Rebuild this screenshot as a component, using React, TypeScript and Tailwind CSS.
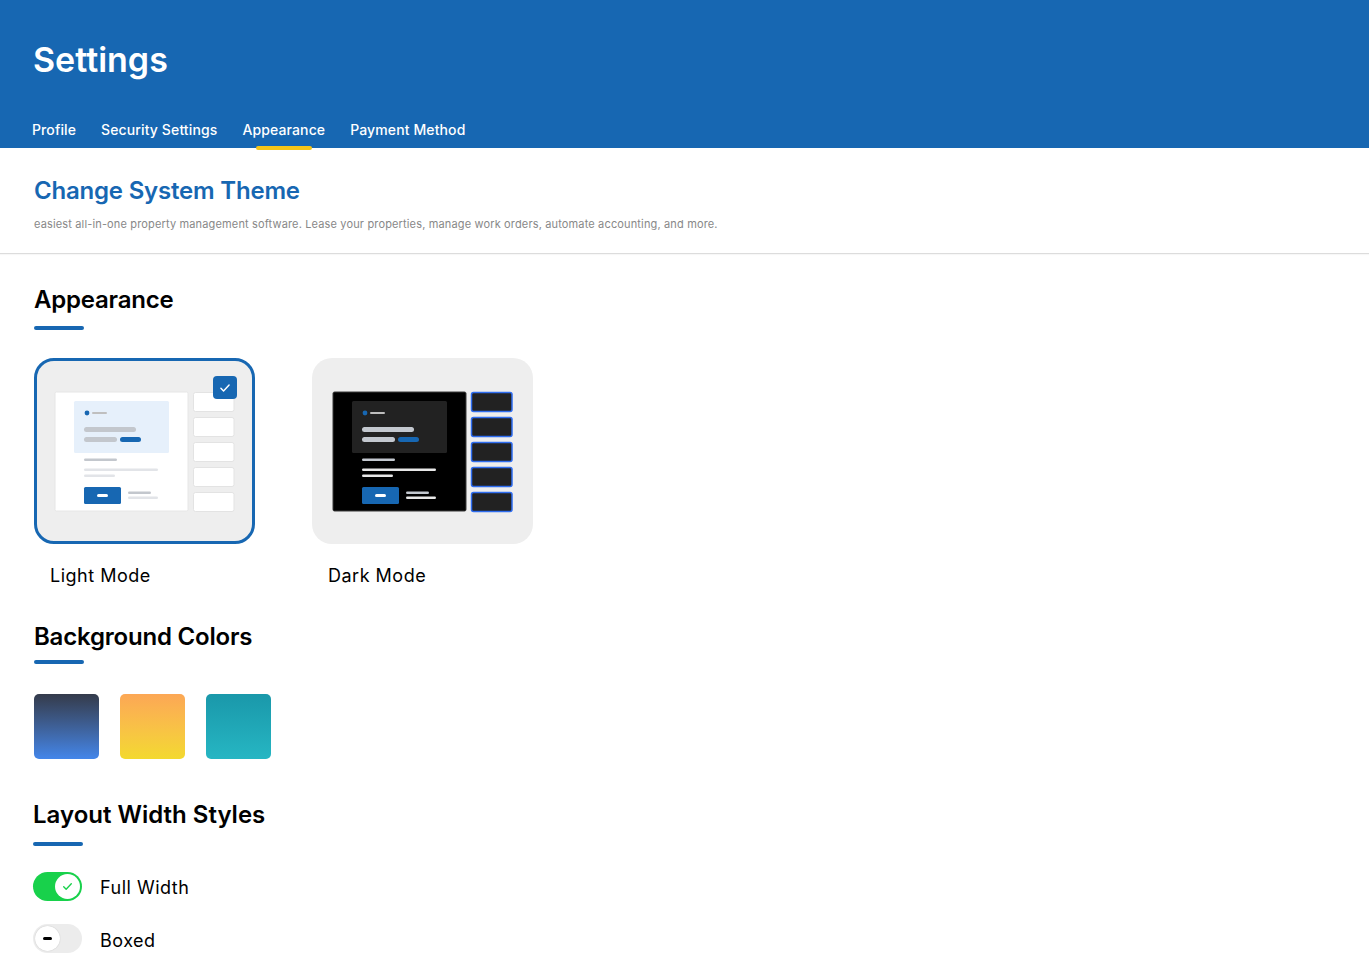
import React from "react";

const BLUE = "#1767B2";

function ThemeArt({ dark }: { dark?: boolean }) {
  const panel = dark ? "#000000" : "#ffffff";
  const panelStroke = dark ? "#3a3a3a" : "#e6e6e6";
  const inner = dark ? "#222222" : "#e6f0fb";
  const barA = dark ? "#c3c8cf" : "#c3c7cd";
  const lineA = dark ? "#c3c8cf" : "#c3c7cd";
  const lineB = dark ? "#e8e8e8" : "#e2e4e8";
  const side = dark ? "#222222" : "#ffffff";
  const sideStroke = dark ? "#2f6df0" : "#e3e3e3";
  return (
    <svg className="absolute inset-0" width="221" height="186" viewBox="0 0 221 186">
      <rect x="21" y="34" width="133" height="119" rx="1.5" fill={panel} stroke={panelStroke} strokeWidth="1" />
      <rect x="40" y="43" width="95" height="52" rx="1.5" fill={inner} />
      <circle cx="53" cy="55" r="2.4" fill={BLUE} />
      <rect x="58" y="54" width="15" height="2" rx="1" fill={dark ? "#bdbdbd" : "#bfbfbf"} />
      <rect x="50" y="69" width="52" height="5" rx="2.5" fill={barA} />
      <rect x="50" y="79" width="33" height="5" rx="2.5" fill={barA} />
      <rect x="86" y="79" width="21" height="5" rx="2.5" fill={BLUE} />
      <rect x="50" y="100.5" width="33" height="2.5" rx="1.2" fill={lineA} />
      <rect x="50" y="110.5" width="74" height="2.5" rx="1.2" fill={lineB} />
      <rect x="50" y="116.5" width="31" height="2.5" rx="1.2" fill={lineB} />
      <rect x="50" y="129" width="37" height="17" rx="1.5" fill={BLUE} />
      <rect x="63" y="136" width="11" height="3" rx="1.5" fill="#ffffff" />
      <rect x="94" y="133.5" width="23" height="2.5" rx="1.2" fill={lineA} />
      <rect x="94" y="138.5" width="30" height="2.5" rx="1.2" fill={lineB} />
      {[34, 59, 84, 109, 134].map((y) => (
        <rect
          key={y}
          x="159.5"
          y={y + 0.5}
          width="40.5"
          height="19"
          rx="2"
          fill={side}
          stroke={sideStroke}
          strokeWidth={dark ? 1.5 : 1}
        />
      ))}
    </svg>
  );
}

function SectionHeading({ children }: { children: React.ReactNode }) {
  return (
    <div>
      <h2 className="text-[24px] leading-[32px] font-semibold text-black tracking-[-0.2px]">{children}</h2>
      <div className="mt-[10px] h-[4px] w-[50px] rounded-full bg-[#1767B2]" />
    </div>
  );
}

export default function App() {
  const tabs = ["Profile", "Security Settings", "Appearance", "Payment Method"];
  return (
    <div className="min-h-[960px] bg-white" style={{ fontFamily: "Inter, 'Noto Sans', sans-serif" }}>
      <header className="h-[148px] bg-[#1767B2] px-[33px] flex flex-col justify-between">
        <h1 className="pt-[40px] text-[34px] leading-[40px] font-semibold text-white tracking-[0px]">Settings</h1>
        <nav className="flex gap-[25px] -ml-[1px]">
          {tabs.map((t) => (
            <div key={t} className="relative pb-[7px]">
              <span className="text-[14px] leading-[20px] font-medium text-white tracking-[0.12px]">{t}</span>
              {t === "Appearance" && (
                <div className="absolute left-1/2 -translate-x-1/2 -bottom-[2px] h-[4px] w-[56px] rounded-full bg-[#F5C518]" />
              )}
            </div>
          ))}
        </nav>
      </header>

      <div className="px-[34px] pt-[27px] pb-[21px] border-b border-[#dcdcdc] shadow-[0_1px_1px_rgba(0,0,0,0.03)]">
        <h2 className="text-[24px] leading-[32px] font-semibold text-[#1767B2] tracking-[-0.2px]">Change System Theme</h2>
        <p className="mt-[9px] text-[11px] leading-[16px] text-[#888888] tracking-[0.15px]">
          easiest all-in-one property management software. Lease your properties, manage work orders, automate accounting, and more.
        </p>
      </div>

      <div className="px-[34px]">
        <div className="pt-[30px]">
          <SectionHeading>Appearance</SectionHeading>
        </div>

        <div className="mt-[28px] flex gap-[57px]">
          <div>
            <div className="relative w-[221px] h-[186px] rounded-[20px] bg-[#eeeeee] border-[3px] border-[#1767B2]">
              <div className="absolute -inset-[3px]">
                <ThemeArt />
                <div className="absolute left-[179px] top-[18px] w-[24px] h-[23px] rounded-[4px] bg-[#1767B2] flex items-center justify-center">
                  <svg width="14" height="14" viewBox="0 0 24 24" fill="none" stroke="white" strokeWidth="2.5" strokeLinecap="round" strokeLinejoin="round">
                    <path d="M5 12.5l4.5 4.5L19 7" />
                  </svg>
                </div>
              </div>
            </div>
            <div className="mt-[18px] pl-[16px] text-[18px] leading-[28px] text-black tracking-[0.5px]">Light Mode</div>
          </div>
          <div>
            <div className="relative w-[221px] h-[186px] rounded-[20px] bg-[#eeeeee]">
              <ThemeArt dark />
            </div>
            <div className="mt-[18px] pl-[16px] text-[18px] leading-[28px] text-black tracking-[0.5px]">Dark Mode</div>
          </div>
        </div>

        <div className="mt-[31px]">
          <h2 className="text-[24px] leading-[32px] font-semibold text-black tracking-[-0.2px]">Background Colors</h2>
          <div className="mt-[7px] h-[4px] w-[50px] rounded-full bg-[#1767B2]" />
        </div>

        <div className="mt-[30px] flex gap-[21px]">
          <div className="w-[65px] h-[65px] rounded-[5px] bg-gradient-to-b from-[#343b4b] to-[#4386ea]" />
          <div className="w-[65px] h-[65px] rounded-[5px] bg-gradient-to-b from-[#fca755] to-[#f3d92e]" />
          <div className="w-[65px] h-[65px] rounded-[5px] bg-gradient-to-b from-[#1a98aa] to-[#26b6c3]" />
        </div>

        <div className="mt-[40px] -ml-[1px]">
          <h2 className="text-[24px] leading-[32px] font-semibold text-black tracking-[0px]">Layout Width Styles</h2>
          <div className="mt-[11px] h-[4px] w-[50px] rounded-full bg-[#1767B2]" />
        </div>

        <div className="mt-[26px] -ml-[1px] flex flex-col gap-[23px]">
          <div className="flex items-center gap-[18px]">
            <div className="w-[49px] h-[29px] rounded-full bg-[#18d14b] flex items-center justify-end pr-[2px]">
              <div className="w-[25px] h-[25px] rounded-full bg-white flex items-center justify-center">
                <svg width="13" height="13" viewBox="0 0 24 24" fill="none" stroke="#18d14b" strokeWidth="2.5" strokeLinecap="round" strokeLinejoin="round">
                  <path d="M5 12.5l4.5 4.5L19 7" />
                </svg>
              </div>
            </div>
            <span className="text-[18px] leading-[28px] text-black tracking-[0.5px] translate-y-[1px]">Full Width</span>
          </div>
          <div className="flex items-center gap-[18px]">
            <div className="w-[49px] h-[29px] rounded-full bg-[#ececec] flex items-center pl-[2px]">
              <div className="w-[25px] h-[25px] rounded-full bg-white shadow-[0_0_1px_rgba(0,0,0,0.25)] flex items-center justify-center">
                <div className="w-[9px] h-[3px] rounded-full bg-black" />
              </div>
            </div>
            <span className="text-[18px] leading-[28px] text-black tracking-[0.5px] translate-y-[2px]">Boxed</span>
          </div>
        </div>
      </div>
    </div>
  );
}
